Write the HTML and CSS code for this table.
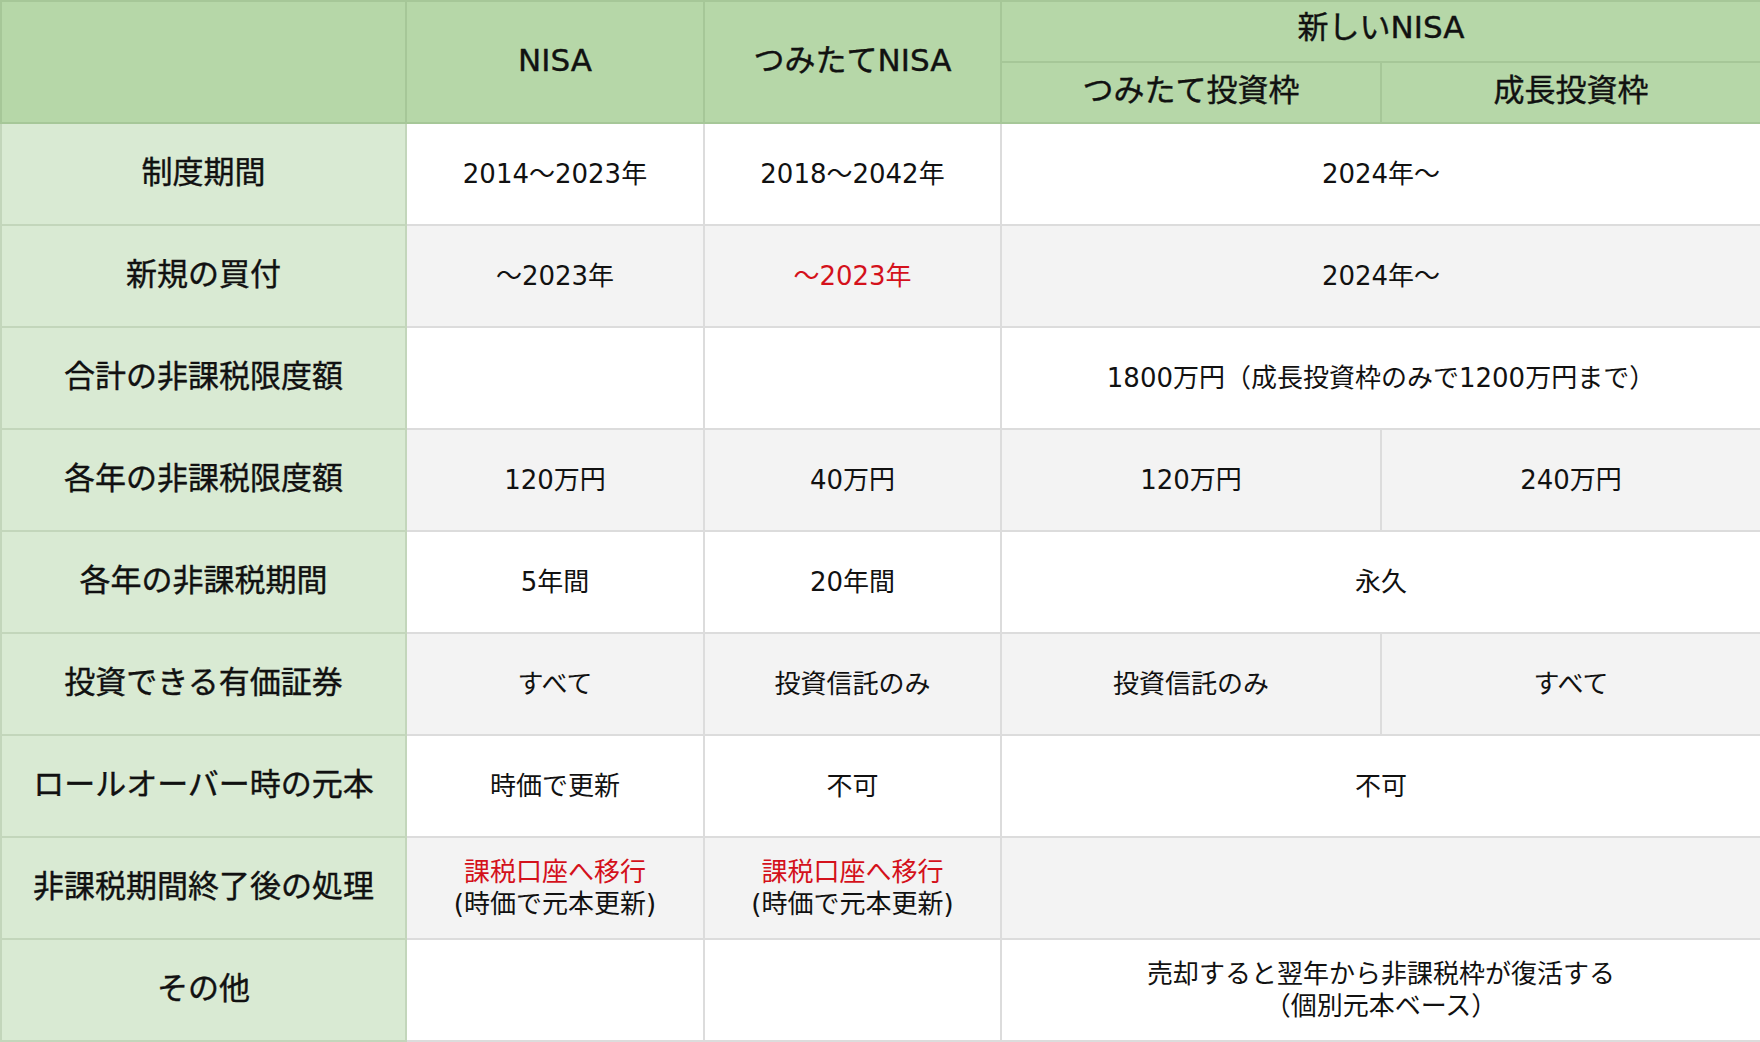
FILE: index.html
```html
<!DOCTYPE html>
<html lang="ja">
<head>
<meta charset="utf-8">
<title>NISA比較</title>
<link rel="stylesheet" href="styles.css">
</head>
<body>
<table class="nisa">
  <colgroup>
    <col class="c-label">
    <col class="c-old">
    <col class="c-old2">
    <col class="c-new">
    <col class="c-new">
  </colgroup>
  <thead>
    <tr class="h1">
      <th class="corner" rowspan="2"></th>
      <th rowspan="2">NISA</th>
      <th rowspan="2">つみたてNISA</th>
      <th colspan="2" class="group">新しいNISA</th>
    </tr>
    <tr class="h2">
      <th>つみたて投資枠</th>
      <th>成長投資枠</th>
    </tr>
  </thead>
  <tbody>
    <tr class="odd">
      <th>制度期間</th>
      <td>2014〜2023年</td>
      <td>2018〜2042年</td>
      <td colspan="2">2024年〜</td>
    </tr>
    <tr class="even">
      <th>新規の買付</th>
      <td>〜2023年</td>
      <td class="red">〜2023年</td>
      <td colspan="2">2024年〜</td>
    </tr>
    <tr class="odd">
      <th>合計の非課税限度額</th>
      <td></td>
      <td></td>
      <td colspan="2">1800万円（成長投資枠のみで1200万円まで）</td>
    </tr>
    <tr class="even">
      <th>各年の非課税限度額</th>
      <td>120万円</td>
      <td>40万円</td>
      <td>120万円</td>
      <td>240万円</td>
    </tr>
    <tr class="odd">
      <th>各年の非課税期間</th>
      <td>5年間</td>
      <td>20年間</td>
      <td colspan="2">永久</td>
    </tr>
    <tr class="even">
      <th>投資できる有価証券</th>
      <td>すべて</td>
      <td>投資信託のみ</td>
      <td>投資信託のみ</td>
      <td>すべて</td>
    </tr>
    <tr class="odd">
      <th>ロールオーバー時の元本</th>
      <td>時価で更新</td>
      <td>不可</td>
      <td colspan="2">不可</td>
    </tr>
    <tr class="even">
      <th>非課税期間終了後の処理</th>
      <td><span class="red">課税口座へ移行</span><br>(時価で元本更新)</td>
      <td><span class="red">課税口座へ移行</span><br>(時価で元本更新)</td>
      <td colspan="2"></td>
    </tr>
    <tr class="odd">
      <th>その他</th>
      <td></td>
      <td></td>
      <td colspan="2">売却すると翌年から非課税枠が復活する<br>（個別元本ベース）</td>
    </tr>
  </tbody>
</table>
</body>
</html>
```

FILE: styles.css
```css
html, body {
  margin: 0;
  padding: 0;
  background: #ffffff;
}

body {
  font-family: "DejaVu Sans", "Noto Sans CJK JP", sans-serif;
  color: #111111;
}

.nisa {
  border-collapse: collapse;
  table-layout: fixed;
  width: 1760px;
}

.c-label { width: 405px; }
.c-old { width: 298px; }
.c-old2 { width: 297px; }
.c-new { width: 380px; }

.nisa th,
.nisa td {
  padding: 0;
  text-align: center;
  vertical-align: middle;
}

/* header */
.nisa thead th {
  background: #b6d7a8;
  border: 2px solid #a6c798;
  font-size: 31px;
  font-weight: 400;
  line-height: 36px;
  padding-bottom: 5px;
  -webkit-text-stroke: 0.4px #111111;
}

.nisa thead th.group {
  padding-bottom: 9px;
}

.h1 { height: 61px; }
.h2 { height: 61px; }

/* body */
.nisa tbody tr { height: 102px; }

.nisa tbody th {
  background: #d9ead3;
  border: 2px solid #c3d6bb;
  font-size: 31px;
  font-weight: 400;
  line-height: 36px;
  padding-bottom: 5px;
  -webkit-text-stroke: 0.4px #111111;
}

.nisa tbody td {
  border: 2px solid #dcdcdc;
  font-size: 26px;
  font-weight: 400;
  line-height: 32px;
  padding-bottom: 0;
}

.nisa tbody tr.odd td { background: #ffffff; }
.nisa tbody tr.even td { background: #f3f3f3; }

.red { color: #d4111b; }
```
